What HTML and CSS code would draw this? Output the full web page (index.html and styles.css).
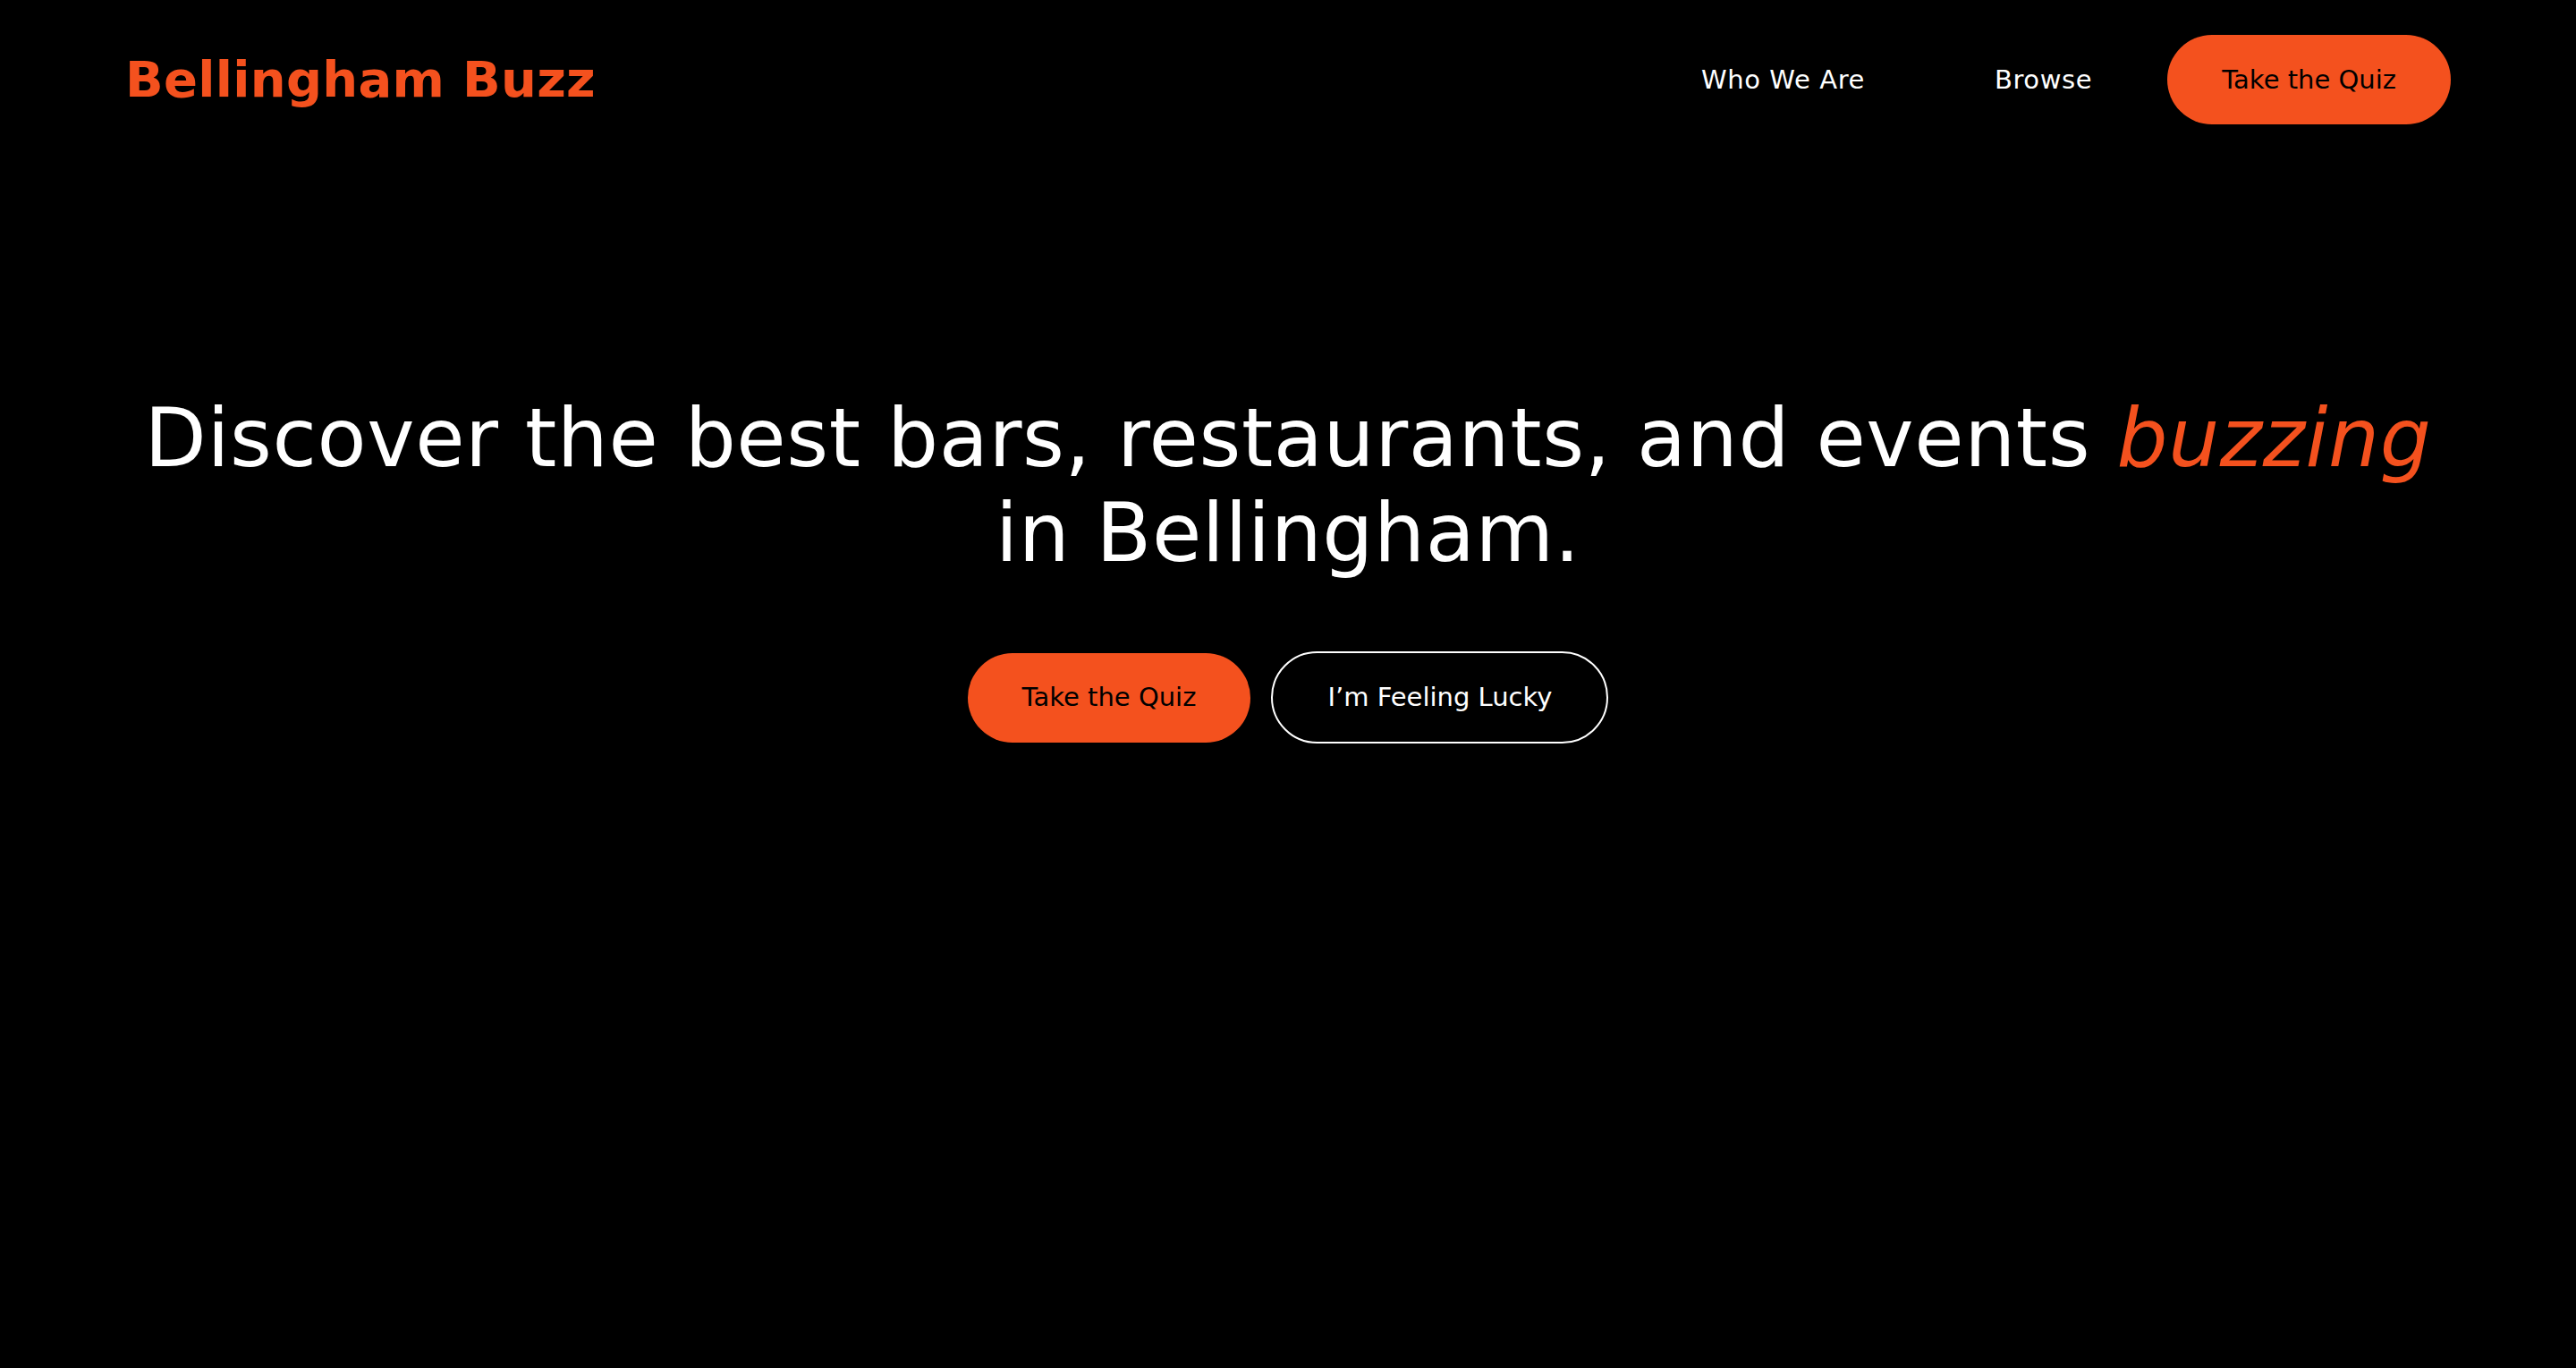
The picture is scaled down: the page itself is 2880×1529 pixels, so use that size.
FILE: index.html
```html
<!DOCTYPE html>
<html lang="en">
<head>
<meta charset="utf-8">
<title>Bellingham Buzz</title>
<link rel="stylesheet" href="styles.css">
</head>
<body>
<header class="site-header">
  <a class="logo" href="#">Bellingham Buzz</a>
  <nav class="nav">
    <a class="nav-link" href="#">Who We Are</a>
    <a class="nav-link" href="#">Browse</a>
    <a class="btn btn-primary" href="#">Take the Quiz</a>
  </nav>
</header>
<main class="hero">
  <h1 class="hero-title">Discover the best bars, restaurants, and events <em class="accent">buzzing</em> in Bellingham.</h1>
  <div class="hero-actions">
    <a class="btn btn-primary" href="#">Take the Quiz</a>
    <a class="btn btn-outline" href="#">I’m Feeling Lucky</a>
  </div>
</main>
</body>
</html>
```
FILE: styles.css
```css
* { box-sizing: border-box; }

html, body {
  margin: 0;
  padding: 0;
  background: #000;
  color: #fff;
  font-family: "DejaVu Sans", "Liberation Sans", sans-serif;
  min-height: 100vh;
}

a { text-decoration: none; color: inherit; }

.site-header {
  display: flex;
  align-items: center;
  justify-content: space-between;
  padding: 39px 140px 0 140px;
}

.logo {
  font-weight: 700;
  font-size: 56px;
  line-height: 56px;
  letter-spacing: 0.3px;
  color: #f4511e;
}

.nav {
  display: flex;
  align-items: center;
  gap: 23px;
}

.nav-link,
.btn {
  display: inline-flex;
  align-items: center;
  justify-content: center;
  height: 100px;
  padding: 0 61px;
  font-size: 29px;
  line-height: 29px;
  white-space: nowrap;
}

.nav-link {
  color: #fff;
  letter-spacing: 0.6px;
}

.btn {
  border-radius: 50px;
}

.btn-primary {
  background: #f4511e;
  color: #000;
}

.btn-outline {
  height: 103px;
  padding: 0 61px;
  border: 2px solid #fff;
  border-radius: 52px;
  color: #fff;
}

.hero {
  padding: 0 140px;
  display: flex;
  flex-direction: column;
  align-items: center;
}

.hero-title {
  margin: 298px 0 0 0;
  font-weight: 400;
  font-size: 90px;
  line-height: 106px;
  letter-spacing: 0.6px;
  text-align: center;
}

.accent {
  color: #f4511e;
  font-style: italic;
}

.hero-actions {
  display: flex;
  align-items: center;
  gap: 23px;
  margin-top: 79px;
}
```
